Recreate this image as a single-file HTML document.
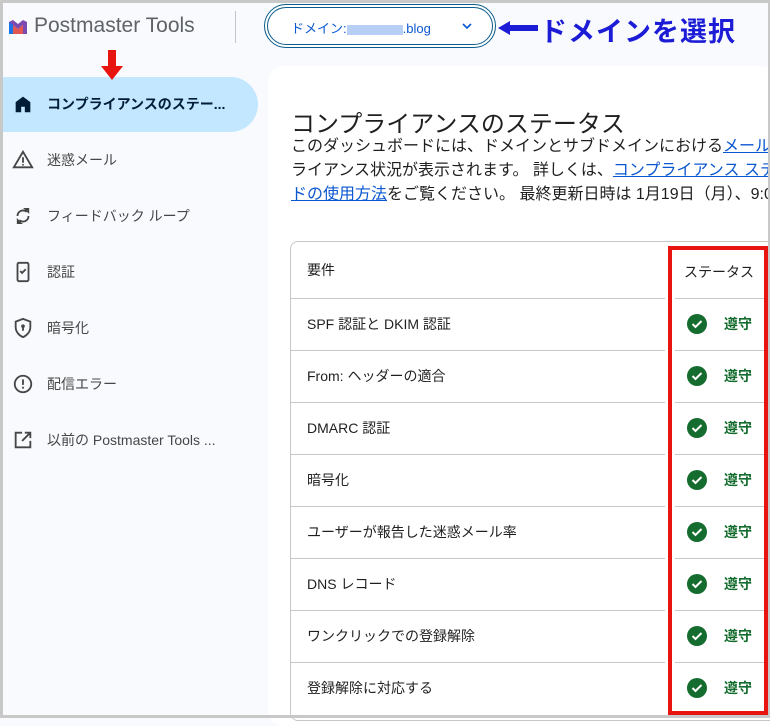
<!DOCTYPE html>
<html><head><meta charset="utf-8"><style>
*{margin:0;padding:0;box-sizing:border-box}
body{width:770px;height:718px;overflow:hidden;background:#f8fafd;font-family:"Liberation Sans","Noto Sans CJK JP",sans-serif;color:#1f1f1f;position:relative}
.abs{position:absolute;white-space:nowrap}
.frame{position:absolute;inset:0;border:3px solid #c8c8c8;border-right-width:2px;pointer-events:none;z-index:10}
.nav{position:absolute;left:0;width:258px;height:54px;display:flex;align-items:center;font-size:14px;color:#444746}
.nav svg{position:absolute;left:12px}
.nav span{position:absolute;left:47px;white-space:nowrap}
.main{position:absolute;left:268px;top:66px;width:510px;height:660px;background:#fff;border-radius:16px}
.tbl{position:absolute;left:290px;top:241px;width:490px;height:480px;border:1px solid #c7c7c7;border-radius:8px;background:#fff}
.row{position:absolute;left:0;height:52px;width:374px;font-size:14px;display:flex;align-items:center;padding-left:16px;color:#1f1f1f;white-space:nowrap}
.hl{position:absolute;height:1px;background:#c7c7c7}
.s{position:absolute;left:724px;font-size:14px;color:#146c2e;font-weight:bold;white-space:nowrap}
</style></head><body>
<svg class="abs" style="left:7px;top:18px" width="22" height="18" viewBox="0 0 22 18"><path d="M2 4 L6 2 L11 6 L16 2 L20 4 L20 16 L16 16 L16 7 L11 11 L6 7 L6 16 L2 16Z" fill="#7b4bb0"/><path d="M6 7 L11 11 L16 7 L16 16 L6 16Z" fill="#d93025" opacity=".8"/><path d="M2 4 L6 7 L6 16 L2 16Z" fill="#1a73e8"/></svg>
<div class="abs" style="left:34px;top:14px;font-size:21px;color:#5f6368">Postmaster Tools</div>
<div class="abs" style="left:235px;top:11px;width:1px;height:32px;background:#c4c7c5"></div>
<div class="abs" style="left:264px;top:4px;width:232px;height:44px;border:4px double #0b5c8a;border-radius:22px;background:#fff"></div>
<div class="abs" style="left:291px;top:18px;font-size:13px;color:#0b57d0">ドメイン:<span style="display:inline-block;width:56px;height:10px;background:#b8cff5;vertical-align:middle"></span>.blog</div>
<svg class="abs" style="left:461px;top:22px" width="12" height="8"><path d="M2 2 L6 6 L10 2" stroke="#0b57d0" stroke-width="1.6" fill="none"/></svg>
<svg class="abs" style="left:496px;top:20px" width="44" height="16"><path d="M2 8 L14 1 L14 5 L42 5 L42 11 L14 11 L14 15Z" fill="#1c1cd6"/></svg>
<div class="abs" style="left:540px;top:10px;font-size:27px;font-weight:bold;color:#1c1cd6;letter-spacing:1px">ドメインを選択</div>

<div class="abs" style="left:0;top:77px;width:258px;height:55px;background:#c2e7ff;border-radius:0 28px 28px 0"></div>
<svg class="abs" style="left:101px;top:50px" width="22" height="30"><path d="M7 0 H15 V16 H22 L11 30 L0 16 H7Z" fill="#e8140f"/></svg>
<div class="nav" style="top:77px;color:#001d35;font-weight:bold"><svg width="22" height="22" viewBox="0 0 24 24"><path d="M4 21V10l8-6 8 6v11h-6v-6h-4v6z" fill="#001d35"/></svg><span>コンプライアンスのステー...</span></div>
<div class="nav" style="top:133px"><svg width="22" height="22" viewBox="0 0 24 24"><path d="M12 3L2 20h20z" fill="none" stroke="#444746" stroke-width="2"/><path d="M12 9v6M12 16.5v1.5" stroke="#444746" stroke-width="2"/></svg><span>迷惑メール</span></div>
<div class="nav" style="top:189px"><svg width="22" height="22" viewBox="0 0 24 24"><path d="M6 12a6 6 0 0 1 10-4.5M18 12a6 6 0 0 1-10 4.5" fill="none" stroke="#444746" stroke-width="2"/><path d="M14 4h4v4zM10 20H6v-4z" fill="#444746" stroke="#444746" stroke-width="1.5"/></svg><span>フィードバック ループ</span></div>
<div class="nav" style="top:245px"><svg width="22" height="22" viewBox="0 0 24 24"><rect x="6" y="2" width="12" height="20" rx="1.5" fill="none" stroke="#444746" stroke-width="2"/><path d="M9 11l2 2 4-4" fill="none" stroke="#444746" stroke-width="2"/></svg><span>認証</span></div>
<div class="nav" style="top:301px"><svg width="22" height="22" viewBox="0 0 24 24"><path d="M12 2l8 3v6c0 5-3.5 9-8 11-4.5-2-8-6-8-11V5z" fill="none" stroke="#444746" stroke-width="2"/><circle cx="12" cy="10" r="2" fill="#444746"/><path d="M12 11v4" stroke="#444746" stroke-width="2"/></svg><span>暗号化</span></div>
<div class="nav" style="top:357px"><svg width="22" height="22" viewBox="0 0 24 24"><circle cx="12" cy="12" r="9" fill="none" stroke="#444746" stroke-width="2"/><path d="M12 7v6M12 15v2" stroke="#444746" stroke-width="2"/></svg><span>配信エラー</span></div>
<div class="nav" style="top:413px"><svg width="22" height="22" viewBox="0 0 24 24"><path d="M11 4H4v16h16v-7" fill="none" stroke="#444746" stroke-width="2"/><path d="M14 4h6v6M20 4l-9 9" fill="none" stroke="#444746" stroke-width="2"/></svg><span>以前の Postmaster Tools ...</span></div>

<div class="main"></div>
<div class="abs" style="left:291px;top:104px;font-size:24px;color:#1f1f1f">コンプライアンスのステータス</div>
<div class="abs" style="left:291px;top:135px;font-size:16px;line-height:24px;color:#1f1f1f">このダッシュボードには、ドメインとサブドメインにおける<u style="color:#0b57d0">メール</u><br>ライアンス状況が表示されます。 詳しくは、<u style="color:#0b57d0">コンプライアンス ステ</u><br><u style="color:#0b57d0">ドの使用方法</u>をご覧ください。 最終更新日時は 1月19日（月）、9:0</div>

<div class="tbl">
<div class="row" style="top:2px">要件</div>
<div class="abs" style="left:393px;top:20px;font-size:14px">ステータス</div>
<div class="hl" style="left:0;width:374px;top:56px"></div><div class="hl" style="left:384px;width:90px;top:56px"></div>
<div class="row" style="top:56px">SPF 認証と DKIM 認証</div>
<div class="hl" style="left:0;width:374px;top:108px"></div><div class="hl" style="left:384px;width:90px;top:108px"></div>
<div class="row" style="top:108px">From: ヘッダーの適合</div>
<div class="hl" style="left:0;width:374px;top:160px"></div><div class="hl" style="left:384px;width:90px;top:160px"></div>
<div class="row" style="top:160px">DMARC 認証</div>
<div class="hl" style="left:0;width:374px;top:212px"></div><div class="hl" style="left:384px;width:90px;top:212px"></div>
<div class="row" style="top:212px">暗号化</div>
<div class="hl" style="left:0;width:374px;top:264px"></div><div class="hl" style="left:384px;width:90px;top:264px"></div>
<div class="row" style="top:264px">ユーザーが報告した迷惑メール率</div>
<div class="hl" style="left:0;width:374px;top:316px"></div><div class="hl" style="left:384px;width:90px;top:316px"></div>
<div class="row" style="top:316px">DNS レコード</div>
<div class="hl" style="left:0;width:374px;top:368px"></div><div class="hl" style="left:384px;width:90px;top:368px"></div>
<div class="row" style="top:368px">ワンクリックでの登録解除</div>
<div class="hl" style="left:0;width:374px;top:420px"></div><div class="hl" style="left:384px;width:90px;top:420px"></div>
<div class="row" style="top:420px">登録解除に対応する</div>
</div>
<div class="abs" style="left:668px;top:246px;width:100px;height:469px;border:4px solid #e8140f"></div>
<div class="frame"></div>
<svg class="abs" style="left:686px;top:313px" width="22" height="22"><circle cx="11" cy="11" r="10" fill="#146c2e"/><path d="M6.5 11l3 3 6-6" stroke="#fff" stroke-width="2" fill="none"/></svg><div class="s" style="top:314px">遵守</div>
<svg class="abs" style="left:686px;top:365px" width="22" height="22"><circle cx="11" cy="11" r="10" fill="#146c2e"/><path d="M6.5 11l3 3 6-6" stroke="#fff" stroke-width="2" fill="none"/></svg><div class="s" style="top:366px">遵守</div>
<svg class="abs" style="left:686px;top:417px" width="22" height="22"><circle cx="11" cy="11" r="10" fill="#146c2e"/><path d="M6.5 11l3 3 6-6" stroke="#fff" stroke-width="2" fill="none"/></svg><div class="s" style="top:418px">遵守</div>
<svg class="abs" style="left:686px;top:469px" width="22" height="22"><circle cx="11" cy="11" r="10" fill="#146c2e"/><path d="M6.5 11l3 3 6-6" stroke="#fff" stroke-width="2" fill="none"/></svg><div class="s" style="top:470px">遵守</div>
<svg class="abs" style="left:686px;top:521px" width="22" height="22"><circle cx="11" cy="11" r="10" fill="#146c2e"/><path d="M6.5 11l3 3 6-6" stroke="#fff" stroke-width="2" fill="none"/></svg><div class="s" style="top:522px">遵守</div>
<svg class="abs" style="left:686px;top:573px" width="22" height="22"><circle cx="11" cy="11" r="10" fill="#146c2e"/><path d="M6.5 11l3 3 6-6" stroke="#fff" stroke-width="2" fill="none"/></svg><div class="s" style="top:574px">遵守</div>
<svg class="abs" style="left:686px;top:625px" width="22" height="22"><circle cx="11" cy="11" r="10" fill="#146c2e"/><path d="M6.5 11l3 3 6-6" stroke="#fff" stroke-width="2" fill="none"/></svg><div class="s" style="top:626px">遵守</div>
<svg class="abs" style="left:686px;top:677px" width="22" height="22"><circle cx="11" cy="11" r="10" fill="#146c2e"/><path d="M6.5 11l3 3 6-6" stroke="#fff" stroke-width="2" fill="none"/></svg><div class="s" style="top:678px">遵守</div>
</body></html>
